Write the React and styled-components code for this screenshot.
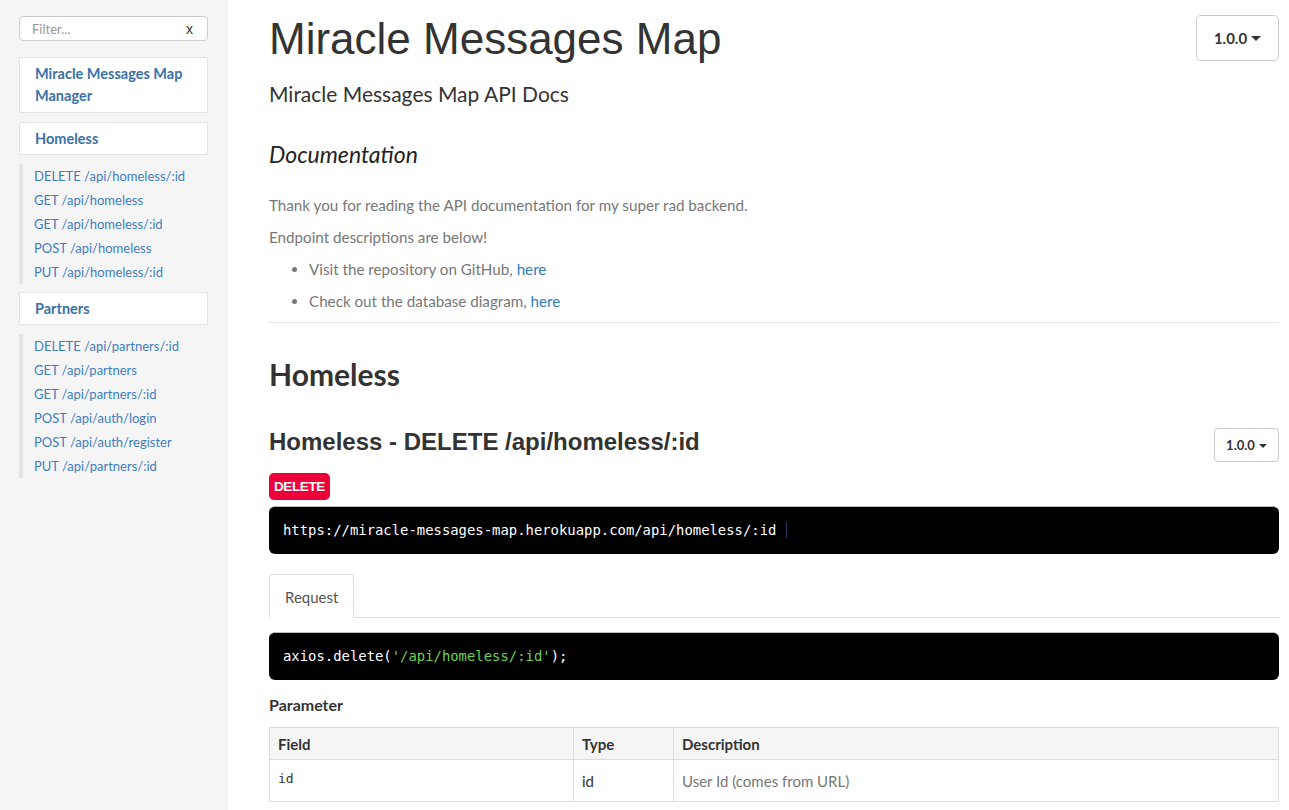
import React from "react";
import styled, { createGlobalStyle } from "styled-components";

const Global = createGlobalStyle`
  html, body { margin: 0; padding: 0; height: 100%; overflow: hidden; background: #fff; }
  body { font-family: "Lato", "Liberation Sans", sans-serif; color: #333; }
  * { box-sizing: border-box; }
`;

const Page = styled.div`
  display: flex;
  height: 810px;
  overflow: hidden;
`;

const Sidebar = styled.nav`
  width: 228px;
  flex: none;
  background: #f5f5f5;
  padding: 16px 20px 0 19px;
  display: flex;
  flex-direction: column;
`;

const FilterBox = styled.div`
  position: relative;
  height: 25px;
  border: 1px solid #ccc;
  border-radius: 4px;
  background: #fff;
  display: flex;
  align-items: center;
  padding: 0 12px;
  font-size: 13px;
  margin-bottom: 16px;
`;

const FilterInput = styled.input`
  border: none;
  outline: none;
  flex: 1;
  min-width: 0;
  font: inherit;
  color: #555;
  padding: 0;
  &::placeholder { color: #999; }
`;

const ClearX = styled.span`
  color: #333;
  font-size: 14px;
  font-family: "Liberation Sans", sans-serif;
  margin-right: 2px;
`;

const NavHeader = styled.a`
  display: block;
  background: #fff;
  border: 1px solid #e5e5e5;
  padding: ${(p) => (p.$tall ? "5px 15px 5px" : "5px 15px 4px")};
  color: #3a71a8;
  font-weight: 700;
  font-size: 14.5px;
  line-height: 22px;
  text-decoration: none;
  margin-bottom: 9px;
`;

const NavGroup = styled.ul`
  list-style: none;
  margin: 0 0 8px 0;
  padding: 0 0 0 11px;
  border-left: 4px solid #e5e5e5;
`;

const NavItem = styled.li`
  font-size: 13px;
  line-height: 24px;
  color: #3f7dbf;
`;

const Main = styled.main`
  flex: 1;
  min-width: 0;
  padding: 0 10px 0 41px;
`;

const HeaderRow = styled.div`
  display: flex;
  justify-content: space-between;
  align-items: flex-start;
`;

const Title = styled.h1`
  font-family: "Liberation Sans", Arial, sans-serif;
  font-weight: 400;
  font-size: 44px;
  line-height: 50px;
  margin: 14px 0 0;
  color: #333;
`;

const VersionButton = styled.button`
  font-family: "Lato", sans-serif;
  font-weight: 700;
  color: #333;
  background: #fff;
  border: 1px solid #ccc;
  border-radius: ${(p) => (p.$small ? "4px" : "5px")};
  font-size: ${(p) => (p.$small ? "13px" : "15px")};
  height: ${(p) => (p.$small ? "34px" : "46px")};
  width: ${(p) => (p.$small ? "65px" : "83px")};
  margin-top: ${(p) => (p.$small ? "-2px" : "15px")};
  display: flex;
  align-items: center;
  justify-content: center;
  gap: 4px;
  padding: 0;
`;

const Caret = styled.span`
  display: inline-block;
  width: 0;
  height: 0;
  border-left: ${(p) => (p.$small ? "4px" : "5px")} solid transparent;
  border-right: ${(p) => (p.$small ? "4px" : "5px")} solid transparent;
  border-top: ${(p) => (p.$small ? "4px" : "5px")} solid #333;
  margin-top: 1px;
`;

const Subtitle = styled.div`
  font-size: 21px;
  line-height: 28px;
  margin-top: 16px;
  color: #333;
`;

const DocHeading = styled.h2`
  font-size: 23px;
  font-style: italic;
  font-weight: 400;
  margin: 31px 0 0;
  line-height: 30px;
  color: #222;
`;

const Para = styled.p`
  font-size: 15.2px;
  line-height: 20px;
  color: #777;
  margin: 0 0 12px;
  &:first-of-type { margin-top: 26px; }
`;

const BulletList = styled.ul`
  margin: 0;
  padding: 0 0 0 40px;
  color: #777;
  font-size: 15.2px;
  line-height: 20px;
`;

const Bullet = styled.li`
  margin-bottom: 12px;
`;

const Link = styled.a`
  color: #337ab7;
  text-decoration: none;
`;

const Rule = styled.hr`
  border: none;
  border-top: 1px solid #e5e5e5;
  margin: -1px 0 0;
`;

const SectionTitle = styled.h1`
  font-size: 30px;
  font-weight: 700;
  line-height: 36px;
  margin: 33px 0 0;
  color: #333;
`;

const ArticleHead = styled.div`
  display: flex;
  justify-content: space-between;
  align-items: flex-start;
  margin-top: 38px;
`;

const ArticleTitle = styled.h2`
  font-family: "Liberation Sans", Arial, sans-serif;
  font-weight: 700;
  font-size: 24px;
  line-height: 28px;
  margin: -2px 0 0;
  color: #333;
`;

const MethodBadge = styled.span`
  display: inline-block;
  background: #ed0039;
  color: #fff;
  font-family: "Liberation Sans", Arial, sans-serif;
  font-weight: 700;
  font-size: 13.5px;
  letter-spacing: -0.4px;
  line-height: 27px;
  padding: 0 5px;
  border-radius: 5px;
  margin-top: 11px;
`;

const CodeBlock = styled.pre`
  margin: ${(p) => p.$mt || "6px"} 0 0;
  background: #000;
  color: #fff;
  border-radius: 6px;
  border-top: 1px solid #bbb;
  font-family: "DejaVu Sans Mono", "Liberation Mono", monospace;
  font-size: 13.9px;
  line-height: 20px;
  height: 48px;
  padding: 13px 14px;
  white-space: pre;
  overflow: hidden;
`;

const UrlText = styled.span`
  padding-right: 10px;
  border-right: 1px solid #1e3a5c;
`;

const Str = styled.span`
  color: #6fcf4f;
`;

const Tabs = styled.div`
  display: flex;
  border-bottom: 1px solid #ddd;
  margin-top: 20px;
`;

const Tab = styled.div`
  font-size: 15px;
  color: #555;
  padding: 0 15px;
  height: 44px;
  line-height: 44px;
  border: 1px solid #ddd;
  border-bottom-color: transparent;
  border-radius: 4px 4px 0 0;
  margin-bottom: -1px;
  background: #fff;
`;

const SubHeading = styled.h3`
  font-size: 16px;
  font-weight: 700;
  line-height: 22px;
  margin: 14px 0 11px;
  color: #333;
`;

const Table = styled.table`
  width: 100%;
  border-collapse: collapse;
  font-size: 15px;
`;

const Th = styled.th`
  text-align: left;
  font-weight: 700;
  background: #f5f5f5;
  border: 1px solid #ddd;
  padding: 0 8px;
  height: 32px;
  color: #333;
  width: ${(p) => p.$w || "auto"};
`;

const Td = styled.td`
  border: 1px solid #ddd;
  padding: 0 8px;
  height: 42px;
  color: ${(p) => (p.$muted ? "#777" : "#333")};
  font-family: ${(p) => (p.$mono ? '"DejaVu Sans Mono", monospace' : "inherit")};
  font-size: ${(p) => (p.$mono ? "13px" : "15px")};
  vertical-align: ${(p) => (p.$mono ? "top" : "middle")};
  padding-top: ${(p) => (p.$mono ? "11px" : "0")};
`;

const homeless = [
  "DELETE /api/homeless/:id",
  "GET /api/homeless",
  "GET /api/homeless/:id",
  "POST /api/homeless",
  "PUT /api/homeless/:id",
];
const partners = [
  "DELETE /api/partners/:id",
  "GET /api/partners",
  "GET /api/partners/:id",
  "POST /api/auth/login",
  "POST /api/auth/register",
  "PUT /api/partners/:id",
];

export default function App() {
  return (
    <>
      <Global />
      <Page>
        <Sidebar>
          <FilterBox>
            <FilterInput placeholder="Filter..." />
            <ClearX>x</ClearX>
          </FilterBox>
          <NavHeader $tall>Miracle Messages Map Manager</NavHeader>
          <NavHeader>Homeless</NavHeader>
          <NavGroup>
            {homeless.map((t) => (
              <NavItem key={t}>{t}</NavItem>
            ))}
          </NavGroup>
          <NavHeader>Partners</NavHeader>
          <NavGroup>
            {partners.map((t) => (
              <NavItem key={t}>{t}</NavItem>
            ))}
          </NavGroup>
        </Sidebar>
        <Main>
          <HeaderRow>
            <Title>Miracle Messages Map</Title>
            <VersionButton>
              1.0.0 <Caret />
            </VersionButton>
          </HeaderRow>
          <Subtitle>Miracle Messages Map API Docs</Subtitle>
          <DocHeading>Documentation</DocHeading>
          <Para>Thank you for reading the API documentation for my super rad backend.</Para>
          <Para>Endpoint descriptions are below!</Para>
          <BulletList>
            <Bullet>
              Visit the repository on GitHub, <Link>here</Link>
            </Bullet>
            <Bullet>
              Check out the database diagram, <Link>here</Link>
            </Bullet>
          </BulletList>
          <Rule />
          <SectionTitle>Homeless</SectionTitle>
          <ArticleHead>
            <ArticleTitle>Homeless - DELETE /api/homeless/:id</ArticleTitle>
            <VersionButton $small>
              1.0.0 <Caret $small />
            </VersionButton>
          </ArticleHead>
          <MethodBadge>DELETE</MethodBadge>
          <CodeBlock>
            <UrlText>https://miracle-messages-map.herokuapp.com/api/homeless/:id</UrlText>
          </CodeBlock>
          <Tabs>
            <Tab>Request</Tab>
          </Tabs>
          <CodeBlock $mt="14px">
            axios.delete(<Str>'/api/homeless/:id'</Str>);
          </CodeBlock>
          <SubHeading>Parameter</SubHeading>
          <Table>
            <thead>
              <tr>
                <Th $w="304px">Field</Th>
                <Th $w="100px">Type</Th>
                <Th>Description</Th>
              </tr>
            </thead>
            <tbody>
              <tr>
                <Td $mono>id</Td>
                <Td>id</Td>
                <Td $muted>User Id (comes from URL)</Td>
              </tr>
            </tbody>
          </Table>
        </Main>
      </Page>
    </>
  );
}
